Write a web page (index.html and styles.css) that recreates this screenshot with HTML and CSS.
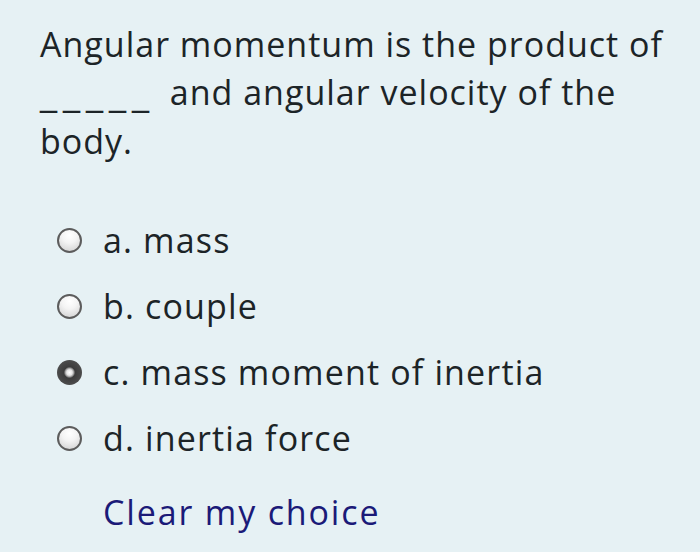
FILE: index.html
```html
<!DOCTYPE html>
<html lang="en">
<head>
<meta charset="utf-8">
<title>Question</title>
<link rel="stylesheet" href="styles.css">
</head>
<body>
<main class="quiz">
  <p class="question">Angular momentum is the product of<br><span class="blank">_____</span> and angular velocity of the<br>body.</p>
  <div class="options">
    <label class="option"><span class="radio"></span><span class="label">a. mass</span></label>
    <label class="option"><span class="radio"></span><span class="label">b. couple</span></label>
    <label class="option"><span class="radio checked"></span><span class="label">c. mass moment of inertia</span></label>
    <label class="option"><span class="radio"></span><span class="label">d. inertia force</span></label>
  </div>
  <a class="clear" href="#">Clear my choice</a>
</main>
</body>
</html>
```
FILE: styles.css
```css
html, body {
  margin: 0;
  padding: 0;
  background: #e6f1f4;
}
body {
  width: 700px;
  height: 552px;
  overflow: hidden;
  font-family: "Open Sans", "Liberation Sans", sans-serif;
  color: #1c2427;
}
.quiz {
  display: flex;
  flex-direction: column;
  padding: 20px 0 0 40px;
}
.question {
  margin: 0;
  font-size: 34px;
  line-height: 48px;
  letter-spacing: 1px;
}
.blank {
  font-family: "DejaVu Sans", sans-serif;
  font-size: 34px;
  letter-spacing: 6px;
  margin-right: 5px;
}
.options {
  display: flex;
  flex-direction: column;
  margin-top: 42px;
}
.option {
  display: flex;
  align-items: center;
  height: 66px;
  padding-left: 17px;
  gap: 21px;
  font-size: 34px;
  line-height: 48px;
  letter-spacing: 1.15px;
}
.radio {
  width: 25px;
  height: 25px;
  box-sizing: border-box;
  border-radius: 50%;
  border: 2px solid #5c5c5c;
  background: radial-gradient(circle at 50% 25%, #ffffff 0%, #f4f4f4 40%, #cdcdcd 100%);
  flex: none;
}
.radio.checked {
  border: none;
  background: radial-gradient(circle at 50% 50%, #ffffff 0%, #e4e4e4 16%, #a0a0a0 24%, #3c3c3c 32%, #4c4c4c 70%, #303030 100%);
}
.clear {
  align-self: flex-start;
  margin: 17px 0 0 63px;
  font-size: 34px;
  line-height: 48px;
  letter-spacing: 1.85px;
  color: #1b1a78;
  text-decoration: none;
}
```
